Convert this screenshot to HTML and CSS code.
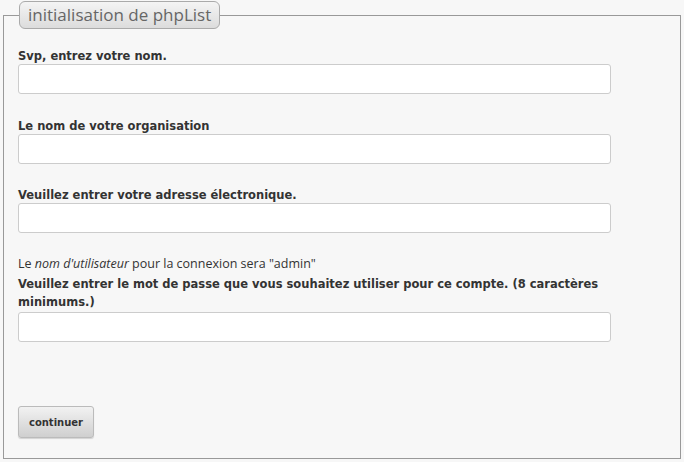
FILE: index.html
```html
<!DOCTYPE html>
<html lang="fr">
<head>
<meta charset="utf-8">
<title>initialisation de phpList</title>
<link rel="stylesheet" href="styles.css">
</head>
<body>
<form class="setup">
  <fieldset class="box">
    <legend class="box-title">initialisation de phpList</legend>
    <div class="field field-first">
      <label class="label" for="name">Svp, entrez votre nom.</label>
      <input class="input" id="name" type="text">
    </div>
    <div class="field">
      <label class="label" for="org">Le nom de votre organisation</label>
      <input class="input" id="org" type="text">
    </div>
    <div class="field">
      <label class="label" for="email">Veuillez entrer votre adresse électronique.</label>
      <input class="input" id="email" type="text">
    </div>
    <div class="field field-note">
      <p class="note">Le <em>nom d'utilisateur</em> pour la connexion sera "admin"</p>
      <label class="label" for="pw">Veuillez entrer le mot de passe que vous souhaitez utiliser pour ce compte. (8 caractères minimums.)</label>
      <input class="input" id="pw" type="password">
    </div>
    <div class="actions">
      <button class="button" type="button">continuer</button>
    </div>
  </fieldset>
</form>
</body>
</html>
```
FILE: styles.css
```css
html, body {
  margin: 0;
  padding: 0;
  background: #f7f7f7;
}
body {
  font-family: "Open Sans", "DejaVu Sans", sans-serif;
  color: #333;
  width: 684px;
  height: 462px;
  overflow: hidden;
}
.setup {
  margin: 0;
  padding: 1px 3px 0 3px;
}
.box {
  margin: 0;
  border: 1px solid #999;
  padding: 0 14px 20px 14px;
  height: 458px;
  box-sizing: border-box;
}
.box-title {
  margin-left: 1px;
  padding: 0 8px 0 8px;
  height: 28px;
  line-height: 26px;
  box-sizing: border-box;
  border: 1px solid #aaa;
  border-radius: 6px;
  background: linear-gradient(#f4f4f4, #dcdcdc);
  color: #666;
  font-size: 17px;
  font-family: "Open Sans", sans-serif;
}
.field {
  display: flex;
  flex-direction: column;
  margin-top: 22.5px;
}
.field-first {
  margin-top: 18px;
}
.field-note {
  margin-top: 22px;
}
.label {
  font-family: "DejaVu Sans", Verdana, sans-serif;
  font-weight: bold;
  font-size: 11.5px;
  line-height: 18px;
  color: #333;
  margin-bottom: -1px;
  padding-right: 40px;
}
.field-note .label {
  margin-bottom: 1px;
}
.note {
  margin: 0;
  font-size: 12.5px;
  line-height: 18px;
  color: #333;
  margin-bottom: 2px;
}
.input {
  width: 593px;
  height: 30px;
  box-sizing: border-box;
  border: 1px solid #ccc;
  border-radius: 3px;
  background: #fff;
  margin: 0;
}
.actions {
  margin-top: 64px;
}
.button {
  width: 76px;
  height: 32px;
  border: 1px solid #bbb;
  border-radius: 3px;
  background: linear-gradient(#f2f2f2, #cfcfcf);
  font-family: "DejaVu Sans", Verdana, sans-serif;
  font-weight: bold;
  font-size: 10px;
  color: #333;
  box-shadow: 0 1px 1px rgba(0,0,0,0.15);
  padding: 0;
}
```
